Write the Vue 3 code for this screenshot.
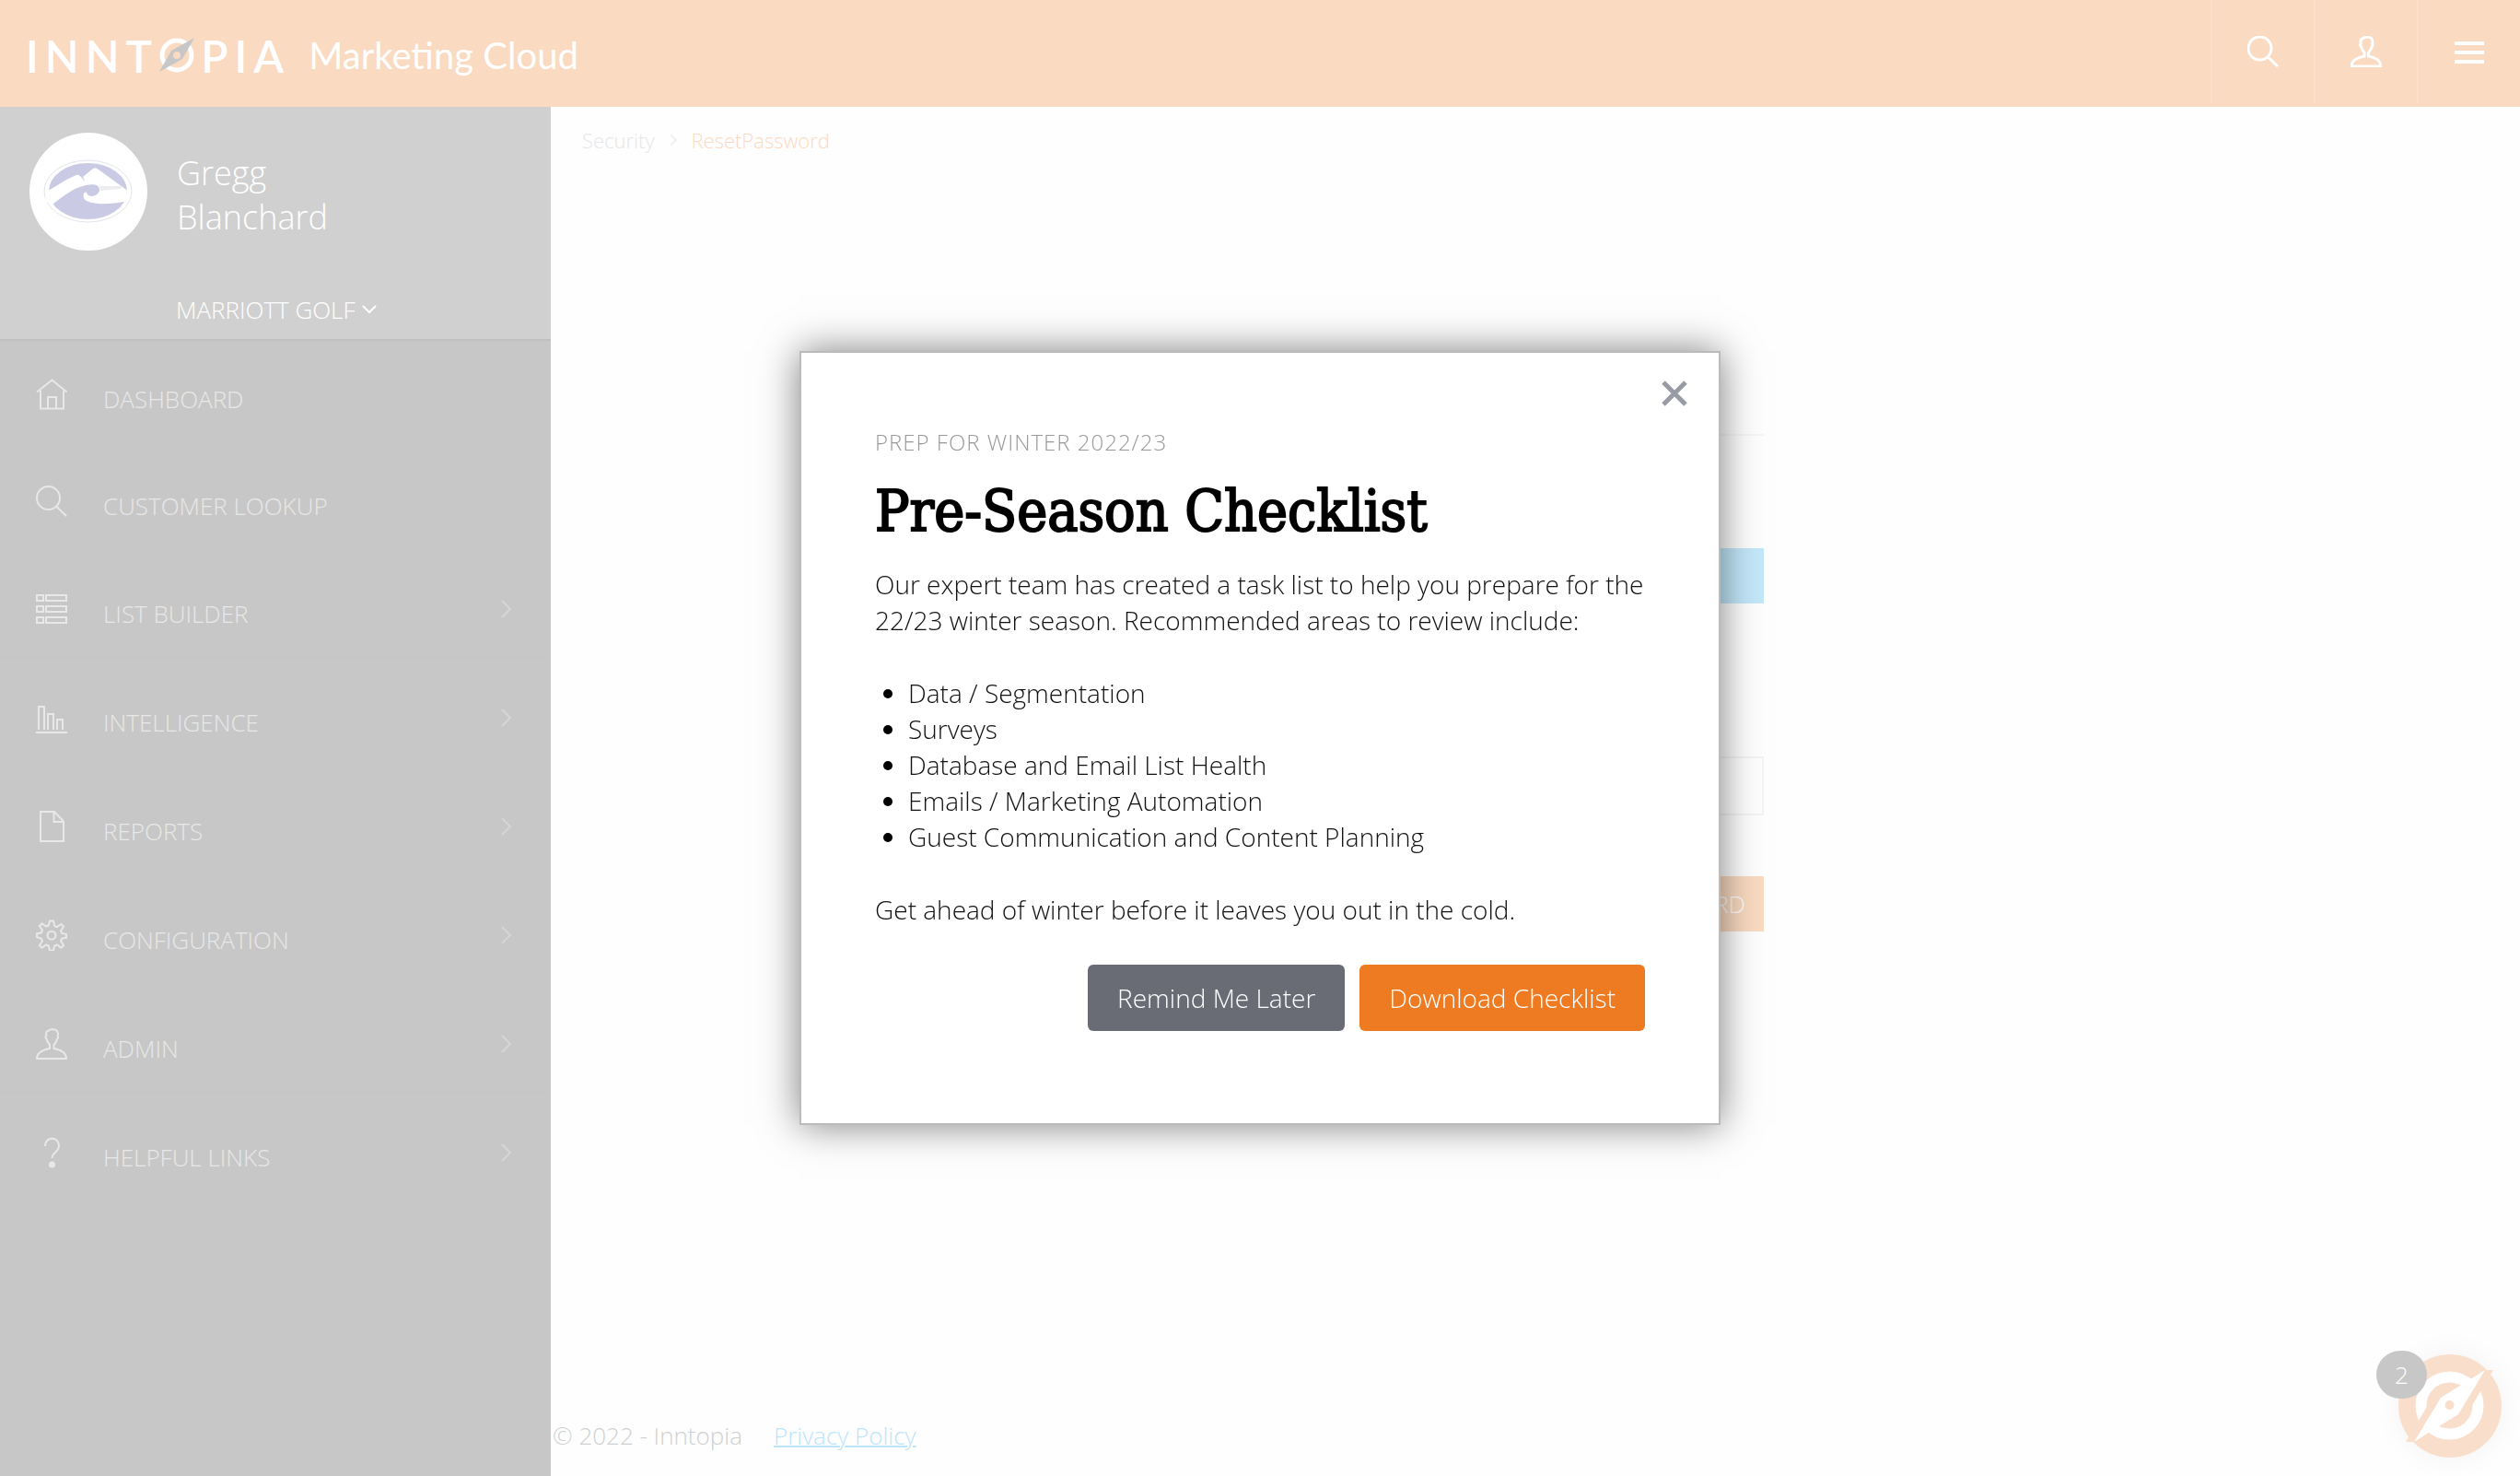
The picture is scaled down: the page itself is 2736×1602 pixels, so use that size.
<script setup>
const menu = [
  { label: 'DASHBOARD', icon: 'home' },
  { label: 'CUSTOMER LOOKUP', icon: 'search' },
  { label: 'LIST BUILDER', icon: 'list', more: true },
  { label: 'INTELLIGENCE', icon: 'bars', more: true },
  { label: 'REPORTS', icon: 'file', more: true },
  { label: 'CONFIGURATION', icon: 'gear', more: true },
  { label: 'ADMIN', icon: 'user', more: true },
  { label: 'HELPFUL LINKS', icon: 'help', more: true }
]

const icons = {
  home: 'M1 14.500 17.500 1.500 33.500 14.500M5 13V32.500H30V13M13 32V20H22V32',
  search: 'M26 13.500a12.500 12.500 0 1 1-25 0a12.500 12.500 0 1 1 25 0M22 22.500 33 33',
  list: 'M1 2H8V8H1ZM11 2H33V8H11ZM1 14H8V20H1ZM11 14H33V20H11ZM1 26H8V32H1ZM11 26H33V32H11Z',
  bars: 'M0 33H34M3 30V5H9V30M13 30V13H19V30M23 30V19H29V30',
  file: 'M5 1H20L30 11.500V33H5ZM19.500 1V12H30',
  gear: 'M15 1.500h4l1.200 5.500 2.600 1.100 4.700-3.100 2.600 2.600-3.100 4.700 1.100 2.600 4.900 1.100v3.600l-4.900 1.100-1.100 2.600 3.100 4.700-2.600 2.600-4.700-3.100-2.600 1.100-1.200 4.900h-4l-1.200-4.900-2.600-1.100-4.700 3.100-2.600-2.600 3.100-4.700-1.100-2.600L1 19v-3.600l4.900-1.100 1.100-2.600-3.100-4.700 2.600-2.600 4.700 3.100 2.600-1.100zM21.500 17.200a4.500 4.500 0 1 1-9 0a4.500 4.500 0 1 1 9 0',
  user: 'M1 33c0-6 6-9.500 14-11v-4c-2-2-3-4-3.500-6.500c-1.500-1-1.200-2.500-.3-3.500c-.7-3.500 .8-5 2.300-5.300c2-2 9-2 10 1.300c.9 1.500 .3 3 .2 4.500c.8 1 .6 2.300-.7 3.300c-.5 2.200-1.500 4.200-3.500 6.200v4c8 1.500 13.500 5 13.500 11z',
  help: 'M10 10c0-11 15-11 15 0c0 6-7.500 7-7.500 13'
}

const areas = [
  'Data / Segmentation',
  'Surveys',
  'Database and Email List Health',
  'Emails / Marketing Automation',
  'Guest Communication and Content Planning'
]
</script>

<template>
  <div class="page">
    <header class="topbar">
      <a class="brand" href="#">
        <span class="wordmark">INNT</span>
        <svg class="compass" viewBox="0 0 40 38" aria-hidden="true">
          <circle cx="20" cy="19" r="16" fill="none" stroke="#fff" stroke-width="5" />
          <path d="M39 0 26 23 1 37 14 14Z" fill="#c7c7c7" />
          <circle cx="20" cy="19" r="4" fill="#fadac1" />
        </svg>
        <span class="wordmark">PIA</span>
        <span class="product">Marketing Cloud</span>
      </a>
      <nav class="tools" aria-label="Tools">
        <button type="button" aria-label="Search">
          <svg class="icon" viewBox="0 0 34 34"><path :d="icons.search" /></svg>
        </button>
        <button type="button" aria-label="Account">
          <svg class="icon" viewBox="0 0 34 34"><path :d="icons.user" /></svg>
        </button>
        <button type="button" aria-label="Menu">
          <svg class="icon thick" viewBox="0 0 34 34"><path d="M1 8H33M1 18H33M1 28H33" /></svg>
        </button>
      </nav>
    </header>

    <div class="body">
      <aside class="sidebar">
        <section class="profile">
          <div class="person">
            <svg class="avatar" viewBox="0 0 128 128" aria-hidden="true">
              <circle cx="64" cy="64" r="64" fill="#fff" />
              <ellipse cx="63.500" cy="63.500" rx="47.500" ry="33.500" fill="none" stroke="#e4e4ee" />
              <ellipse cx="63.500" cy="63.500" rx="42.500" ry="30.500" fill="#cacae5" />
              <path
                d="M18 64C30 58 40 50 51 46C54 45 56 48 60 53L58 48L69 39Q72 37 75 40L108 64L104 74.500C85 79 62 78 59 71C58 67 59 64 62 65C63 71 74 70 76 63C77 55 66 55 58 58C46 61 37 69 26 77L17 75Z"
                fill="#fff"
              />
              <path d="M76 58H102L98 61L77 63Z" fill="#ededf0" />
            </svg>
            <div class="name">Gregg<br />Blanchard</div>
          </div>
          <button type="button" class="client">
            MARRIOTT GOLF
            <svg class="caret" viewBox="0 0 16 10"><path d="M1 1 8 8 15 1" /></svg>
          </button>
        </section>
        <nav class="menu" aria-label="Main">
          <a v-for="item in menu" :key="item.label" href="#" class="item" :class="{ more: item.more }">
            <svg class="icon" viewBox="0 0 34 34" aria-hidden="true">
              <path :d="icons[item.icon]" />
              <circle v-if="item.icon === 'help'" class="dot" cx="17.500" cy="30" r="3.500" />
            </svg>
            <span class="label">{{ item.label }}</span>
            <svg v-if="item.more" class="arrow" viewBox="0 0 12 20" aria-hidden="true"><path d="M1 1 10 10 1 19" /></svg>
          </a>
        </nav>
      </aside>

      <main class="main">
        <nav class="crumbs" aria-label="Breadcrumb">
          <a href="#">Security</a>
          <svg viewBox="0 0 8 12" aria-hidden="true"><path d="M1 0 7 6 1 12" /></svg>
          <a href="#" class="current">ResetPassword</a>
        </nav>
        <form class="reset" @submit.prevent>
          <div class="rule"></div>
          <div class="notice"></div>
          <input type="password" aria-label="Password" />
          <button type="submit">RESET PASSWORD</button>
        </form>
        <footer class="footer">
          <span>© 2022 - Inntopia</span>
          <a href="#">Privacy Policy</a>
        </footer>
      </main>
    </div>

    <button type="button" class="fab" aria-label="Guides">
      <svg viewBox="0 0 112 112" aria-hidden="true">
        <circle cx="55.500" cy="55.500" r="31" fill="none" stroke="#fff" stroke-width="12" />
        <path d="M65 65 94 17H103L73 67ZM46 47 17 95H8L38 45Z" fill="#fadecc" />
        <path d="M94 17 65 65 17 95 46 47Z" fill="#fff" />
        <circle cx="55.500" cy="55" r="5" fill="#fadecc" />
      </svg>
      <span class="badge">2</span>
    </button>

    <section class="modal" role="dialog" aria-labelledby="modal-title">
      <button type="button" class="close" aria-label="Close">
        <svg viewBox="0 0 28 28"><path d="M2 2 26 26M26 2 2 26" /></svg>
      </button>
      <p class="eyebrow">PREP FOR WINTER 2022/23</p>
      <h1 id="modal-title">Pre-Season Checklist</h1>
      <p>
        Our expert team has created a task list to help you prepare for the 22/23 winter season. Recommended areas to
        review include:
      </p>
      <ul>
        <li v-for="area in areas" :key="area">{{ area }}</li>
      </ul>
      <p>Get ahead of winter before it leaves you out in the cold.</p>
      <div class="actions">
        <button type="button" class="later">Remind Me Later</button>
        <button type="button" class="download">Download Checklist</button>
      </div>
    </section>
  </div>
</template>

<style>
body {
  margin: 0;
  background: #fefefe;
}
</style>

<style scoped>
.page {
  display: flex;
  flex-direction: column;
  min-height: 100vh;
  font-family: "Open Sans", "Liberation Sans", sans-serif;
  font-weight: 300;
  font-size: 26px;
}
button {
  margin: 0;
  padding: 0;
  border: 0;
  background: none;
  font: inherit;
  color: inherit;
}
a {
  color: inherit;
  text-decoration: none;
}
svg {
  display: block;
  flex: none;
}
.icon {
  width: 34px;
  height: 34px;
  fill: none;
  stroke: currentColor;
  stroke-width: 2;
}
.topbar {
  display: flex;
  justify-content: space-between;
  height: 116px;
  background: #fadac1;
  color: #fff;
}
.brand {
  display: flex;
  align-items: center;
  padding: 4px 0 0 28px;
  font-family: Lato, sans-serif;
  font-weight: 400;
}
.wordmark {
  font-size: 48px;
  font-weight: 600;
  letter-spacing: 7px;
}
.compass {
  width: 40px;
  height: 38px;
  margin-right: 6px;
}
.product {
  margin-left: 20px;
  font-size: 40px;
}
.tools {
  display: flex;
  height: 112px;
}
.tools button {
  display: flex;
  align-items: center;
  justify-content: center;
  width: 112px;
  box-sizing: border-box;
  border-left: 2px solid #fbdfc9;
}
.tools .icon {
  stroke-width: 3;
}
.tools .thick {
  stroke-width: 4;
}
.body {
  display: flex;
  flex: 1;
}
.sidebar {
  width: 598px;
  flex: none;
  background: #c7c7c7;
}
.profile {
  display: flex;
  flex-direction: column;
  height: 252px;
  padding-top: 28px;
  box-sizing: border-box;
  background: #d0d0d0;
  color: #fff;
}
.person {
  display: flex;
  align-items: center;
  gap: 32px;
  padding-left: 32px;
}
.avatar {
  width: 128px;
  height: 128px;
}
.name {
  padding-top: 8px;
  font-size: 36px;
  line-height: 48px;
}
.client {
  display: flex;
  align-items: center;
  gap: 8px;
  margin: 46px 0 0 191px;
  line-height: 36px;
}
.caret {
  width: 16px;
  height: 10px;
  fill: none;
  stroke: #fff;
  stroke-width: 2;
}
.menu {
  border-top: 2px solid #bfbfbf;
}
.item {
  display: flex;
  align-items: center;
  height: 116px;
  padding: 0 42px 0 39px;
  color: #e8e8e8;
}
.more {
  height: 117px;
  border-bottom: 1px solid #c9c9c9;
}
.dot {
  fill: currentColor;
  stroke: none;
}
.label {
  flex: 1;
  padding: 10px 0 0 39px;
}
.arrow {
  width: 12px;
  height: 20px;
  fill: none;
  stroke: #d6d6d6;
  stroke-width: 2;
}
.main {
  display: flex;
  flex-direction: column;
  flex: 1;
}
.crumbs {
  display: flex;
  align-items: center;
  gap: 16px;
  height: 72px;
  padding-left: 34px;
  font-size: 22px;
  color: #e6e6e6;
}
.crumbs svg {
  width: 8px;
  height: 12px;
  fill: none;
  stroke: #f0f0f0;
  stroke-width: 2;
}
.current {
  color: #fbd9c1;
}
.reset {
  display: flex;
  flex-direction: column;
  width: 46.6%;
  margin-left: 15%;
  padding-top: 283px;
}
.rule {
  height: 2px;
  background: #f7f7f7;
}
.notice {
  height: 60px;
  margin-top: 122px;
  background: #c3e8fa;
}
.reset input {
  height: 64px;
  margin-top: 166px;
  box-sizing: border-box;
  border: 2px solid #f4f4f4;
  background: #fefefe;
}
.reset button {
  align-self: flex-end;
  height: 60px;
  margin-top: 66px;
  padding: 0 20px;
  background: #fadac1;
  color: #fff;
}
.footer {
  display: flex;
  gap: 34px;
  margin-top: auto;
  padding: 0 0 24px 2px;
  line-height: 40px;
  color: #d0d0d0;
}
.footer a {
  color: #bde4fa;
  text-decoration: underline;
  text-decoration-thickness: 2px;
}
.fab {
  position: fixed;
  right: 20px;
  bottom: 20px;
  width: 112px;
  height: 112px;
  border-radius: 50%;
  background: #fadecc;
  box-shadow: 0 0 32px rgba(0, 0, 0, 0.05);
}
.fab svg {
  width: 112px;
  height: 112px;
}
.badge {
  position: absolute;
  top: -4px;
  left: -24px;
  width: 55px;
  line-height: 52px;
  border-radius: 26px;
  background: #c7c7c7;
  color: #fff;
}
.modal {
  position: fixed;
  top: 50%;
  left: 50%;
  width: 1000px;
  padding: 74px 80px 100px;
  box-sizing: border-box;
  transform: translate(-50%, -50%);
  border: 2px solid #bbb;
  background: #fff;
  box-shadow: 0 0 40px rgba(0, 0, 0, 0.5);
  font-size: 28px;
  line-height: 39px;
  color: #111;
}
.modal p {
  margin: 0;
}
.modal .eyebrow {
  font-size: 24px;
  line-height: 46px;
  letter-spacing: 1px;
  color: #999;
}
.modal h1 {
  margin: 16px 0 24px;
  font-family: "DejaVu Serif Condensed", "DejaVu Serif", serif;
  font-weight: 400;
  font-size: 62px;
  line-height: 72px;
  color: #000;
  -webkit-text-stroke: 2px #000;
}
.modal ul {
  margin: 40px 0;
  padding-left: 36px;
}
.modal li::marker {
  color: #000;
}
.close {
  position: absolute;
  top: 30px;
  right: 34px;
}
.close svg {
  width: 28px;
  height: 28px;
  fill: none;
  stroke: #999ba4;
  stroke-width: 5;
}
.actions {
  display: flex;
  justify-content: flex-end;
  gap: 16px;
  margin-top: 40px;
}
.actions button {
  height: 72px;
  padding: 0 32px;
  border-radius: 6px;
  color: #fff;
}
.later {
  background: #6a6c75;
}
.download {
  background: #ee7b22;
}
</style>
